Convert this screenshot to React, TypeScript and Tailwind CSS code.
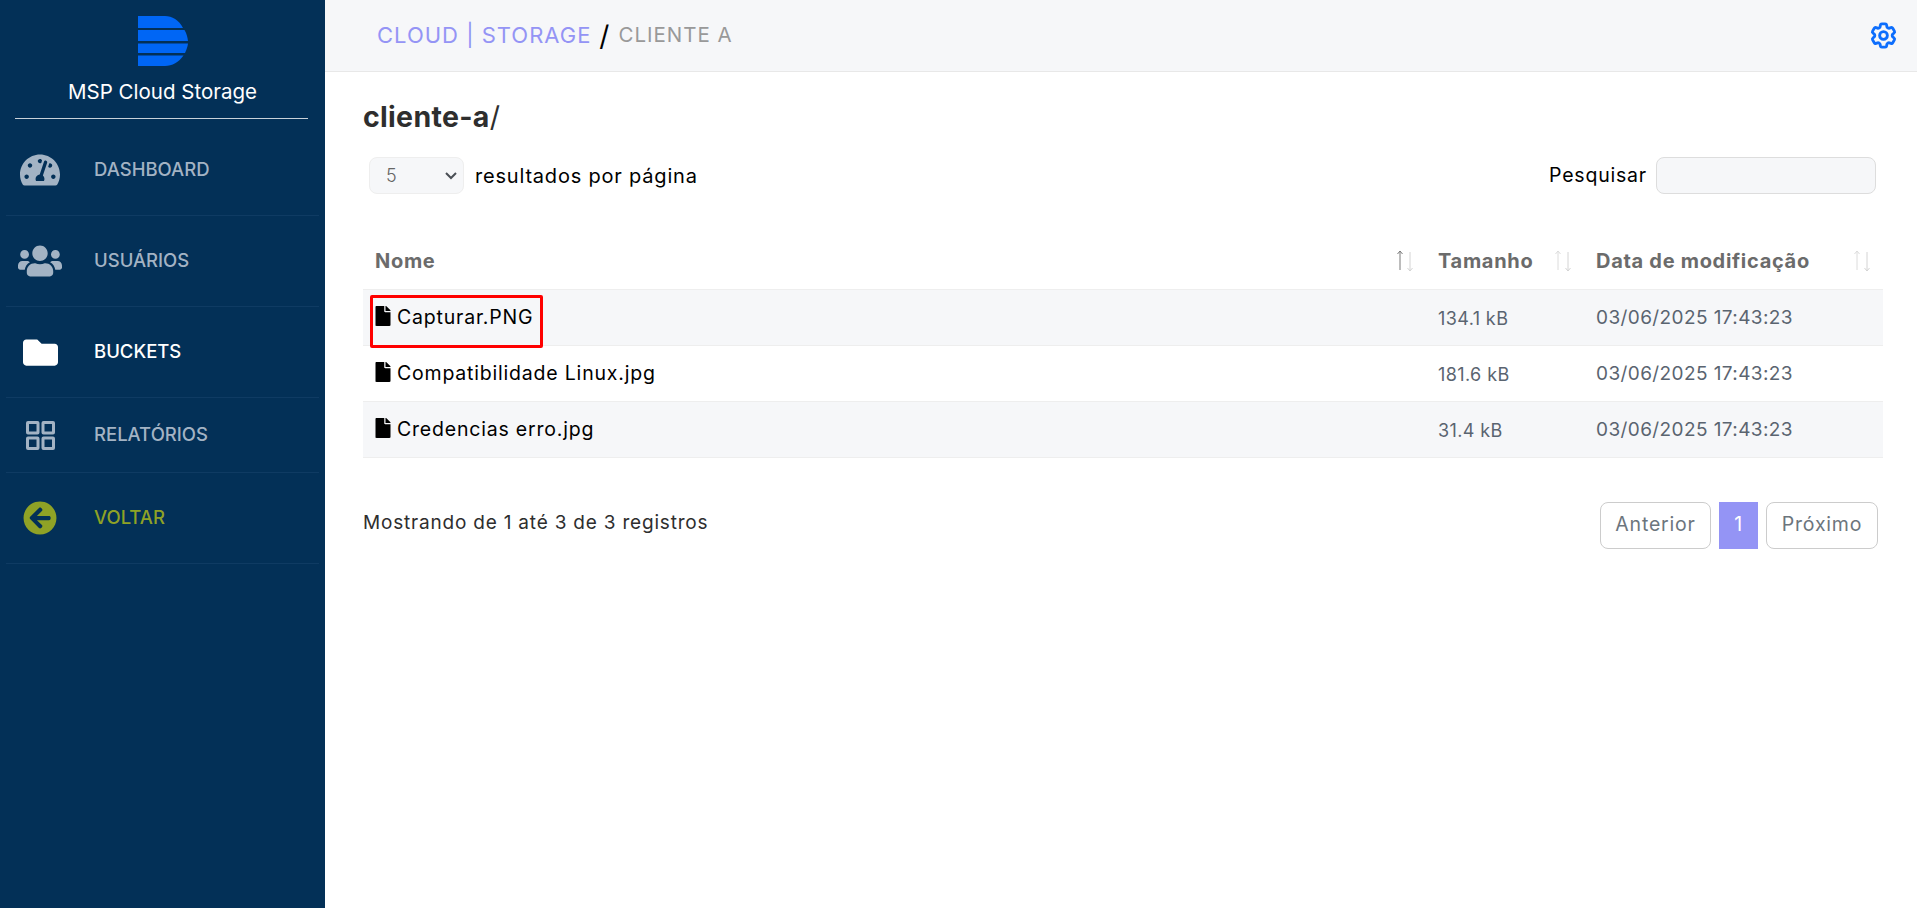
import React from 'react';
import { FaTachometerAlt, FaUsers, FaFolder, FaArrowCircleLeft, FaFile } from 'react-icons/fa';
import { HiOutlineCog6Tooth } from 'react-icons/hi2';

const SortArrows: React.FC<{ active?: boolean }> = ({ active }) => (
  <svg width="18" height="21" viewBox="0 0 18 21" fill="none" strokeWidth="1" className="block">
    <path d="M4 20V1M1.5 4L4 1l2.5 3" stroke={active ? '#7a7a7a' : '#dcdcdc'} transform="translate(0 -1)" />
    <path d="M14 1v19M11.500 17l2.500 3 2.500-3" stroke="#d4d4d4" />
  </svg>
);

const GridIcon = () => (
  <svg width="29" height="29" viewBox="0 0 29 29" fill="none" stroke="currentColor" strokeWidth="3">
    <rect x="1.500" y="1.500" width="10.500" height="10.500" rx="0.5" />
    <rect x="17" y="1.500" width="10.500" height="10.500" rx="0.5" />
    <rect x="1.500" y="17" width="10.500" height="10.500" rx="0.5" />
    <rect x="17" y="17" width="10.500" height="10.500" rx="0.5" />
  </svg>
);

const Logo = () => (
  <svg width="50" height="50" viewBox="0 0 50 50">
    <path d="M0 0H27C34 0 41 4 45 12H0Z" fill="#0066f5" />
    <path d="M0 14H46.500C48.500 17 49.500 21 50 25H0Z" fill="#0066f5" />
    <path d="M0 27.500H50C49.500 31 48.500 33.500 47 37H0Z" fill="#0066f5" />
    <path d="M0 39.500H45.500C41 46 34 50 27 50H0Z" fill="#0066f5" />
  </svg>
);

const navItems = [
  { label: 'DASHBOARD', icon: <FaTachometerAlt size={40} />, text: 'text-[#a3b3c4]', h: 'h-[97px] pt-[5px]' },
  { label: 'USUÁRIOS', icon: <FaUsers size={44} />, text: 'text-[#a3b3c4]', h: 'h-[91px]' },
  { label: 'BUCKETS', icon: <FaFolder size={35} />, text: 'text-white', h: 'h-[91px]' },
  { label: 'RELATÓRIOS', icon: <GridIcon />, text: 'text-[#a3b3c4]', h: 'h-[75px]' },
  { label: 'VOLTAR', icon: <FaArrowCircleLeft size={34} />, text: 'text-[#8fa226]', h: 'h-[91px]' },
];

const files = [
  { name: 'Capturar.PNG', size: '134.1 kB', marked: true },
  { name: 'Compatibilidade Linux.jpg', size: '181.6 kB' },
  { name: 'Credencias erro.jpg', size: '31.4 kB' },
];

const App: React.FC = () => {
  return (
    <div className="flex min-h-[908px] bg-white font-['Inter','Liberation_Sans',sans-serif] text-[19.5px] tracking-[0.8px]">
      {/* Sidebar */}
      <aside className="w-[325px] shrink-0 bg-[#033057] tracking-normal">
        <div className="flex flex-col items-center pt-4">
          <Logo />
          <div className="mt-[12px] text-[20.5px] leading-7 text-white">MSP Cloud Storage</div>
          <div className="mt-[12px] -ml-[2px] h-px w-[293px] bg-[#c9d1d9]" />
        </div>
        <nav className="px-[6px]">
          {navItems.map((item) => (
            <div key={item.label} className={`flex items-center border-b border-[#0f3b63] ${item.h} ${item.text}`}>
              <div className="flex w-[68px] shrink-0 justify-center">{item.icon}</div>
              <span className="ml-[20px] text-[18.5px] font-medium">{item.label}</span>
            </div>
          ))}
        </nav>
      </aside>

      {/* Main */}
      <main className="min-w-0 flex-1">
        <header className="flex h-[72px] items-center justify-between border-b border-[#e8e8e8] bg-[#f6f7f9] pl-[52px] pr-[18px]">
          <div className="flex items-center tracking-[1px]">
            <span className="text-[22px] text-[#9494f5]">CLOUD | STORAGE</span>
            <span className="mx-2 text-[28px] leading-none text-black">/</span>
            <span className="text-[20.5px] text-[#999999]">CLIENTE A</span>
          </div>
          <HiOutlineCog6Tooth size={31} strokeWidth={2.2} className="text-[#0d6efd]" />
        </header>

        <div className="pl-[38px] pr-[34px]">
          <h1 className="mt-[27px] text-[28.5px] leading-9 font-bold tracking-[0.3px] text-[#2e2e2e]">
            cliente-a<span className="font-normal">/</span>
          </h1>

          <div className="mt-[22px] flex items-center justify-between pl-[6px] pr-[7px]">
            <div className="flex items-center gap-[11px]">
              <div className="flex h-[37px] w-[95px] items-center justify-between rounded-lg border border-[#eeeeee] bg-[#f6f7f9] pl-4 pr-[6px] text-[18px] font-light tracking-normal text-[#666666]">
                5
                <svg width="12" height="8" viewBox="0 0 12 8" fill="none" stroke="#4a4f55" strokeWidth="2">
                  <path d="M1 1l5 5 5-5" />
                </svg>
              </div>
              <span className="text-[20px] text-black">resultados por página</span>
            </div>
            <div className="flex items-center gap-[9px]">
              <span className="text-black">Pesquisar</span>
              <input className="h-[37px] w-[220px] rounded-lg border border-[#dddddd] bg-[#f6f7f9]" />
            </div>
          </div>

          <table className="mt-[37px] w-full table-fixed border-collapse">
            <colgroup>
              <col />
              <col className="w-[158px]" />
              <col className="w-[299px]" />
            </colgroup>
            <thead>
              <tr className="h-[58px] border-b border-[#eeeeee] text-left text-[20px] font-bold tracking-[0.7px] text-[#6b6b6b]">
                <th className="px-3 pt-[3px]">
                  <div className="flex items-center justify-between">
                    Nome
                    <SortArrows active />
                  </div>
                </th>
                <th className="px-3 pt-[3px]">
                  <div className="flex items-center justify-between">
                    Tamanho
                    <SortArrows />
                  </div>
                </th>
                <th className="px-3 pt-[3px]">
                  <div className="flex items-center justify-between">
                    Data de modificação
                    <SortArrows />
                  </div>
                </th>
              </tr>
            </thead>
            <tbody>
              {files.map((file, i) => (
                <tr key={file.name} className={`h-[56px] border-b border-[#eeeeee] ${i % 2 === 0 ? 'bg-[#f6f7f9]' : 'bg-white'}`}>
                  <td className="relative pl-3">
                    {file.marked && (
                      <div className="absolute left-[7px] top-[5px] h-[53px] w-[173px] rounded-[2px] border-[3px] border-[#ff0000]" />
                    )}
                    <div className="flex items-center gap-[4.5px] pt-[2px] text-black">
                      <FaFile size={20} className="-ml-[2.5px] -mt-[4px] shrink-0" />
                      {file.name}
                    </div>
                  </td>
                  <td className="px-3 pt-[2px] text-[18px] tracking-[0.4px] text-[#5a6470]">{file.size}</td>
                  <td className="px-3 pt-[2px] text-[19px] tracking-[0.4px] text-[#5a6470]">03/06/2025 17:43:23</td>
                </tr>
              ))}
            </tbody>
          </table>

          <div className="mt-[44px] flex items-start justify-between">
            <span className="pt-[7px] text-[19px] tracking-[0.8px] text-[#2e2e2e]">Mostrando de 1 até 3 de 3 registros</span>
            <div className="mr-[5px] flex items-center gap-2 text-[#6c757d]">
              <button className="h-[47px] w-[111px] rounded-lg border border-[#cccccc] bg-white">Anterior</button>
              <button className="h-[47px] w-[39px] bg-[#9494f5] text-white">1</button>
              <button className="h-[47px] w-[112px] rounded-lg border border-[#cccccc] bg-white">Próximo</button>
            </div>
          </div>
        </div>
      </main>
    </div>
  );
};

export default App;
